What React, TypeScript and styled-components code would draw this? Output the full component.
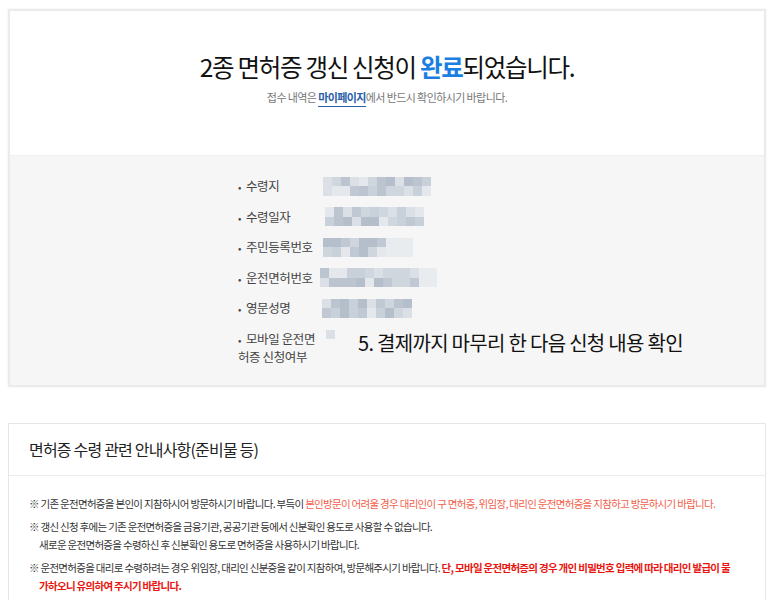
import React from 'react'
import styled, { createGlobalStyle } from 'styled-components'

const GlobalStyle = createGlobalStyle`
  html, body {
    margin: 0;
    padding: 0;
    background: #fff;
  }
  body {
    font-family: 'Noto Sans CJK KR', 'Noto Sans', sans-serif;
    color: #222;
  }
`

const Page = styled.div`
  width: 774px;
  padding: 9px 8px 0 8px;
  box-sizing: border-box;
`

const ResultCard = styled.section`
  border: 2px solid #ebebeb;
  box-shadow: 0 0 2px rgba(0, 0, 0, 0.08);
  background: #fff;
`

const Head = styled.div`
  height: 144px;
  display: flex;
  flex-direction: column;
  align-items: center;
  padding-top: 40px;
  box-sizing: border-box;
`

const Title = styled.h1`
  margin: 0;
  font-size: 24.5px;
  font-weight: 400;
  letter-spacing: -1.3px;
  color: #111;
  line-height: 32px;
  em {
    font-style: normal;
    font-weight: 700;
    color: #1b7fe2;
  }
`

const Sub = styled.p`
  margin: 6px 0 0;
  font-size: 11px;
  letter-spacing: -0.6px;
  color: #777;
  a {
    color: #2a5ea8;
    font-weight: 700;
    text-decoration: none;
    border-bottom: 1px solid #2a5ea8;
    padding-bottom: 1px;
  }
`

const InfoArea = styled.div`
  background: #f6f6f6;
  border-top: 1px solid #efefef;
  padding: 15px 0 20px 228px;
`

const Row = styled.div<{ $tall?: boolean }>`
  display: flex;
  align-items: ${(p) => (p.$tall ? 'flex-start' : 'center')};
  height: ${(p) => (p.$tall ? 'auto' : '30.5px')};
  margin-top: ${(p) => (p.$tall ? '6px' : '0')};
`

const Label = styled.span`
  width: 83px;
  flex: none;
  font-size: 12.5px;
  letter-spacing: -0.4px;
  color: #444;
  line-height: 17px;
  word-break: break-all;
  &::before {
    content: '•';
    margin-right: 5px;
    font-size: 10px;
  }
`

const Mosaic = styled.div<{ $cols: number; $offset: number }>`
  display: grid;
  grid-template-columns: repeat(${(p) => p.$cols}, 9px);
  grid-auto-rows: 9.5px;
  margin-left: ${(p) => p.$offset}px;
  filter: blur(0.7px);
`

const Cell = styled.i<{ $c: string }>`
  display: block;
  background: ${(p) => p.$c};
`

const Note = styled.span`
  margin-left: 23px;
  margin-top: 0;
  font-size: 20px;
  letter-spacing: -0.7px;
  color: #111;
  line-height: 26px;
`

const GuideCard = styled.section`
  margin-top: 36px;
  border: 1px solid #e6e6e6;
  border-bottom: none;
  background: #fff;
  padding-bottom: 20px;
`

const GuideHead = styled.h2`
  margin: 0;
  height: 51px;
  display: flex;
  align-items: center;
  padding-left: 20px;
  border-bottom: 1px solid #ececec;
  font-size: 16px;
  font-weight: 400;
  letter-spacing: -0.8px;
  color: #222;
`

const GuideBody = styled.div`
  padding: 19px 28px 0 20px;
`

const Item = styled.p`
  margin: 0 0 5px;
  padding-left: 10px;
  text-indent: -10px;
  font-size: 10.5px;
  line-height: 18px;
  letter-spacing: -0.7px;
  color: #333;
`

const Red = styled.span<{ $strong?: boolean }>`
  color: ${(p) => (p.$strong ? '#e8160f' : '#f2604a')};
  font-weight: ${(p) => (p.$strong ? 700 : 400)};
`

const shades = ['#bfc8d3', '#cfd6de', '#dbe0e6', '#b5bfcb', '#e4e8ec', '#c8d0d9', '#bcc5cf']

const makeCells = (cols: number, rows: number, seed: number, fade = 0) => {
  const out: string[] = []
  let s = seed
  for (let r = 0; r < rows; r++) {
    for (let c = 0; c < cols; c++) {
      s = (s * 9301 + 49297) % 233280
      const idx = Math.floor((s / 233280) * shades.length)
      out.push(fade && c >= cols - fade ? '#e9ecef' : shades[idx])
    }
  }
  return out
}

type Info = { label: string; cols: number; rows: number; offset: number; seed: number; fade?: number }

const infos: Info[] = [
  { label: '수령지', cols: 12, rows: 2, offset: 2, seed: 3 },
  { label: '수령일자', cols: 11, rows: 2, offset: 4, seed: 11 },
  { label: '주민등록번호', cols: 10, rows: 2, offset: 2, seed: 7, fade: 3 },
  { label: '운전면허번호', cols: 13, rows: 2, offset: -1, seed: 19, fade: 2 },
  { label: '영문성명', cols: 10, rows: 2, offset: 1, seed: 5 },
]

const Blur: React.FC<Omit<Info, 'label'>> = ({ cols, rows, offset, seed, fade }) => (
  <Mosaic $cols={cols} $offset={offset}>
    {makeCells(cols, rows, seed, fade).map((c, i) => (
      <Cell key={i} $c={c} />
    ))}
  </Mosaic>
)

export default function App() {
  return (
    <Page>
      <GlobalStyle />
      <ResultCard>
        <Head>
          <Title>
            2종 면허증 갱신 신청이 <em>완료</em>되었습니다.
          </Title>
          <Sub>
            접수 내역은 <a href="#">마이페이지</a>에서 반드시 확인하시기 바랍니다.
          </Sub>
        </Head>
        <InfoArea>
          {infos.map((info) => (
            <Row key={info.label}>
              <Label>{info.label}</Label>
              <Blur {...info} />
            </Row>
          ))}
          <Row $tall>
            <Label>모바일 운전면허증 신청여부</Label>
            <Blur cols={1} rows={1} offset={5} seed={2} />
            <Note>5. 결제까지 마무리 한 다음 신청 내용 확인</Note>
          </Row>
        </InfoArea>
      </ResultCard>

      <GuideCard>
        <GuideHead>면허증 수령 관련 안내사항(준비물 등)</GuideHead>
        <GuideBody>
          <Item>
            ※ 기존 운전면허증을 본인이 지참하시어 방문하시기 바랍니다. 부득이{' '}
            <Red>본인방문이 어려울 경우 대리인이 구 면허증, 위임장, 대리인 운전면허증을 지참하고 방문하시기 바랍니다.</Red>
          </Item>
          <Item>
            ※ 갱신 신청 후에는 기존 운전면허증을 금융기관, 공공기관 등에서 신분확인 용도로 사용할 수 없습니다.
            <br />
            새로운 운전면허증을 수령하신 후 신분확인 용도로 면허증을 사용하시기 바랍니다.
          </Item>
          <Item>
            ※ 운전면허증을 대리로 수령하려는 경우 위임장, 대리인 신분증을 같이 지참하여, 방문해주시기 바랍니다.{' '}
            <Red $strong>단, 모바일 운전면허증의 경우 개인 비밀번호 입력에 따라 대리인 발급이 불가하오니 유의하여 주시기 바랍니다.</Red>
          </Item>
        </GuideBody>
      </GuideCard>
    </Page>
  )
}
